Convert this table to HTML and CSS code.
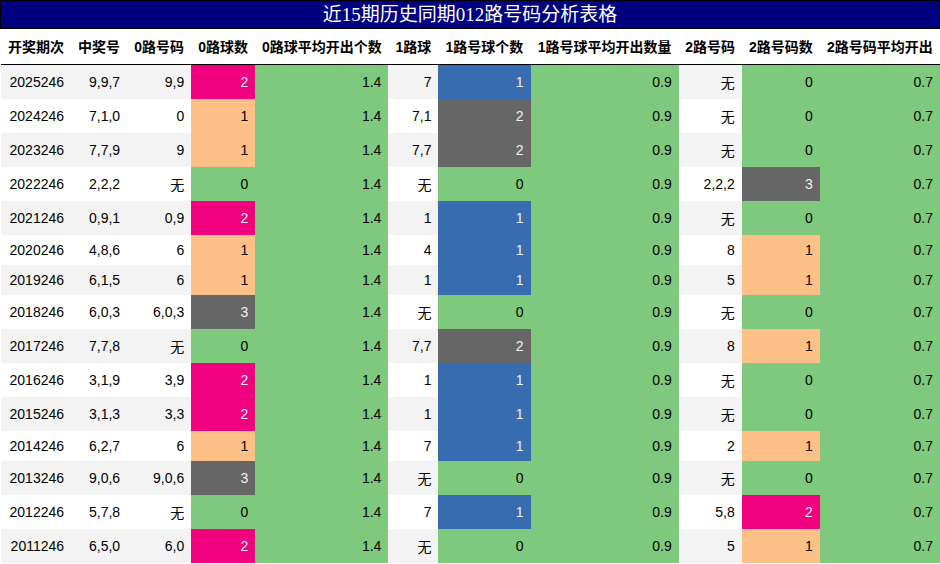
FILE: index.html
```html
<!DOCTYPE html>
<html lang="zh">
<head>
<meta charset="utf-8">
<title>近15期历史同期012路号码分析表格</title>
<link rel="stylesheet" href="styles.css">
</head>
<body>
<div class="page">
  <div class="title">近15期历史同期012路号码分析表格</div>
  <table class="grid">
    <colgroup>
      <col class="w70"><col class="w56"><col class="w64"><col class="w64"><col class="w133"><col class="w50"><col class="w92"><col class="w148"><col class="w63"><col class="w78"><col class="w120">
    </colgroup>
    <thead>
      <tr>
        <th>开奖期次</th><th>中奖号</th><th>0路号码</th><th>0路球数</th><th>0路球平均开出个数</th><th>1路球</th><th>1路号球个数</th><th>1路号球平均开出数量</th><th>2路号码</th><th>2路号码数</th><th>2路号码平均开出</th>
      </tr>
    </thead>
    <tbody>
      <tr><td>2025246</td><td>9,9,7</td><td>9,9</td><td class="pink">2</td><td class="green">1.4</td><td>7</td><td class="blue">1</td><td class="green">0.9</td><td>无</td><td class="green">0</td><td class="green">0.7</td></tr>
      <tr><td>2024246</td><td>7,1,0</td><td>0</td><td class="peach">1</td><td class="green">1.4</td><td>7,1</td><td class="grey">2</td><td class="green">0.9</td><td>无</td><td class="green">0</td><td class="green">0.7</td></tr>
      <tr><td>2023246</td><td>7,7,9</td><td>9</td><td class="peach">1</td><td class="green">1.4</td><td>7,7</td><td class="grey">2</td><td class="green">0.9</td><td>无</td><td class="green">0</td><td class="green">0.7</td></tr>
      <tr><td>2022246</td><td>2,2,2</td><td>无</td><td class="green">0</td><td class="green">1.4</td><td>无</td><td class="green">0</td><td class="green">0.9</td><td>2,2,2</td><td class="grey">3</td><td class="green">0.7</td></tr>
      <tr><td>2021246</td><td>0,9,1</td><td>0,9</td><td class="pink">2</td><td class="green">1.4</td><td>1</td><td class="blue">1</td><td class="green">0.9</td><td>无</td><td class="green">0</td><td class="green">0.7</td></tr>
      <tr><td>2020246</td><td>4,8,6</td><td>6</td><td class="peach">1</td><td class="green">1.4</td><td>4</td><td class="blue">1</td><td class="green">0.9</td><td>8</td><td class="peach">1</td><td class="green">0.7</td></tr>
      <tr><td>2019246</td><td>6,1,5</td><td>6</td><td class="peach">1</td><td class="green">1.4</td><td>1</td><td class="blue">1</td><td class="green">0.9</td><td>5</td><td class="peach">1</td><td class="green">0.7</td></tr>
      <tr><td>2018246</td><td>6,0,3</td><td>6,0,3</td><td class="grey">3</td><td class="green">1.4</td><td>无</td><td class="green">0</td><td class="green">0.9</td><td>无</td><td class="green">0</td><td class="green">0.7</td></tr>
      <tr><td>2017246</td><td>7,7,8</td><td>无</td><td class="green">0</td><td class="green">1.4</td><td>7,7</td><td class="grey">2</td><td class="green">0.9</td><td>8</td><td class="peach">1</td><td class="green">0.7</td></tr>
      <tr><td>2016246</td><td>3,1,9</td><td>3,9</td><td class="pink">2</td><td class="green">1.4</td><td>1</td><td class="blue">1</td><td class="green">0.9</td><td>无</td><td class="green">0</td><td class="green">0.7</td></tr>
      <tr><td>2015246</td><td>3,1,3</td><td>3,3</td><td class="pink">2</td><td class="green">1.4</td><td>1</td><td class="blue">1</td><td class="green">0.9</td><td>无</td><td class="green">0</td><td class="green">0.7</td></tr>
      <tr><td>2014246</td><td>6,2,7</td><td>6</td><td class="peach">1</td><td class="green">1.4</td><td>7</td><td class="blue">1</td><td class="green">0.9</td><td>2</td><td class="peach">1</td><td class="green">0.7</td></tr>
      <tr><td>2013246</td><td>9,0,6</td><td>9,0,6</td><td class="grey">3</td><td class="green">1.4</td><td>无</td><td class="green">0</td><td class="green">0.9</td><td>无</td><td class="green">0</td><td class="green">0.7</td></tr>
      <tr><td>2012246</td><td>5,7,8</td><td>无</td><td class="green">0</td><td class="green">1.4</td><td>7</td><td class="blue">1</td><td class="green">0.9</td><td>5,8</td><td class="pink">2</td><td class="green">0.7</td></tr>
      <tr><td>2011246</td><td>6,5,0</td><td>6,0</td><td class="pink">2</td><td class="green">1.4</td><td>无</td><td class="green">0</td><td class="green">0.9</td><td>5</td><td class="peach">1</td><td class="green">0.7</td></tr>
    </tbody>
  </table>
</div>
</body>
</html>
```

FILE: styles.css
```css
html, body {
  margin: 0;
  padding: 0;
  background: #ffffff;
  overflow: hidden;
}

.page {
  width: 940px;
}

.title {
  box-sizing: border-box;
  width: 940px;
  height: 29px;
  border: 1px solid #000000;
  background: #000080;
  color: #ffffff;
  font-family: "Liberation Serif", "Noto Sans CJK SC", serif;
  font-size: 19px;
  line-height: 27px;
  text-align: center;
}

.grid {
  border-collapse: collapse;
  border-spacing: 0;
  table-layout: fixed;
  width: 939px;
  margin-left: 1px;
  font-family: "Liberation Sans", "Noto Sans CJK SC", sans-serif;
  font-size: 14px;
  color: #000000;
}

.w70 { width: 70px; }
.w56 { width: 56px; }
.w64 { width: 64px; }
.w133 { width: 133px; }
.w50 { width: 50px; }
.w92 { width: 92px; }
.w148 { width: 148px; }
.w63 { width: 63px; }
.w78 { width: 78px; }
.w120 { width: 120px; }

.grid th {
  padding: 7px 0 8px;
  font-weight: bold;
  text-align: center;
  white-space: nowrap;
  border-bottom: 1px solid #000000;
  background: #ffffff;
}

.grid td {
  padding: 7px 7px;
  text-align: right;
  white-space: nowrap;
  vertical-align: middle;
}

.grid tbody tr:nth-child(odd) td {
  background: #f3f3f3;
}

.grid tbody tr:nth-child(even) td {
  background: #ffffff;
}

.grid tbody tr td.green { background: #7fc97f; color: #000000; }
.grid tbody tr td.peach { background: #fdc086; color: #000000; }
.grid tbody tr td.pink { background: #f0027f; color: #f1f1f1; }
.grid tbody tr td.blue { background: #386cb0; color: #f1f1f1; }
.grid tbody tr td.grey { background: #666666; color: #f1f1f1; }
```
